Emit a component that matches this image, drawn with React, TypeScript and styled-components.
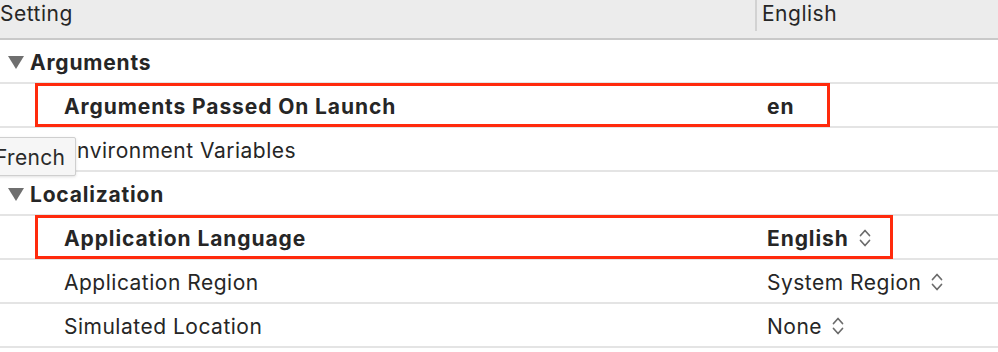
import * as React from 'react'
import styled, { createGlobalStyle } from 'styled-components'

const GlobalStyle = createGlobalStyle`
  html, body {
    margin: 0;
    padding: 0;
    background: #ffffff;
    overflow: hidden;
  }
  body {
    font-family: Inter, "Noto Sans", sans-serif;
    color: #262626;
    -webkit-font-smoothing: antialiased;
  }
`

type Item = {
  name: string
  value?: string
  group?: boolean
  bold?: boolean
  popup?: boolean
  highlight?: number
  tooltip?: string
}

const items: Item[] = [
  { name: 'Arguments', group: true },
  { name: 'Arguments Passed On Launch', value: 'en', bold: true, highlight: 795 },
  { name: 'Environment Variables', tooltip: 'French' },
  { name: 'Localization', group: true },
  { name: 'Application Language', value: 'English', bold: true, popup: true, highlight: 858 },
  { name: 'Application Region', value: 'System Region', popup: true },
  { name: 'Simulated Location', value: 'None', popup: true },
]

const Disclosure = () => (
  <svg width="16" height="13" viewBox="0 0 16 13">
    <polygon points="0,0 16,0 8,13" fill="#6f6f6f" />
  </svg>
)

const UpDown = () => (
  <svg width="12" height="20" viewBox="0 0 12 20">
    <polyline points="1.5,7.5 6,2.5 10.5,7.5" fill="none" stroke="#6b6b6b" strokeWidth="1.7" strokeLinecap="round" strokeLinejoin="round" />
    <polyline points="1.5,12.5 6,17.5 10.5,12.5" fill="none" stroke="#6b6b6b" strokeWidth="1.7" strokeLinecap="round" strokeLinejoin="round" />
  </svg>
)

const App = () => (
  <Editor>
    <GlobalStyle />
    <HeaderRow>
      <HeaderCell>Setting</HeaderCell>
      <HeaderCell>English</HeaderCell>
    </HeaderRow>
    {items.map((it) => (
      <Row key={it.name}>
        {it.group ? (
          <GroupName>
            <Disclosure />
            {it.name}
          </GroupName>
        ) : (
          <Name bold={it.bold}>{it.name}</Name>
        )}
        <Value bold={it.bold}>
          {it.value}
          {it.popup && <UpDown />}
        </Value>
        {it.highlight && <Highlight style={{ width: it.highlight }} />}
        {it.tooltip && <Tooltip>{it.tooltip}</Tooltip>}
      </Row>
    ))}
  </Editor>
)

const Editor = styled.div`
  width: 998px;
  height: 352px;
  overflow: hidden;
  font-size: 21px;
  letter-spacing: 0.5px;
`
const HeaderRow = styled.div`
  display: grid;
  grid-template-columns: 757px 1fr;
  height: 38px;
  background: #ececec;
  border-bottom: 2px solid #c9c9c9;
`
const HeaderCell = styled.div`
  display: flex;
  align-items: flex-start;
  padding: 1px 0 0 0;
  height: 31px;
  box-sizing: border-box;
  & + & {
    padding-left: 5px;
  }
  &:first-child {
    border-right: 2px solid #d2d2d2;
  }
`
const Row = styled.div`
  position: relative;
  display: grid;
  grid-template-columns: 767px 1fr;
  align-items: center;
  box-sizing: border-box;
  height: 44px;
  padding-top: 2px;
  border-bottom: 2px solid #e4e4e4;
`
const GroupName = styled.div`
  display: flex;
  align-items: center;
  gap: 6px;
  padding-left: 8px;
  font-weight: 700;
  letter-spacing: 0.8px;
`
const Name = styled.div<{ bold?: boolean }>`
  padding-left: 64px;
  font-weight: ${(p) => (p.bold ? 700 : 400)};
  letter-spacing: ${(p) => (p.bold ? '0.9px' : '0.5px')};
`
const Value = styled.div<{ bold?: boolean }>`
  display: flex;
  align-items: center;
  gap: 10px;
  font-weight: ${(p) => (p.bold ? 700 : 400)};
  letter-spacing: ${(p) => (p.bold ? '0.9px' : '0.5px')};
`
const Highlight = styled.div`
  position: absolute;
  left: 35px;
  top: -1px;
  bottom: -1px;
  border: 3px solid #ff2a0c;
  box-sizing: border-box;
  pointer-events: none;
`
const Tooltip = styled.div`
  position: absolute;
  left: -8px;
  top: 9px;
  height: 39px;
  width: 84px;
  box-sizing: border-box;
  display: flex;
  align-items: center;
  padding: 2px 0 0 2px;
  background: #f6f6f6;
  border: 1px solid #cfcfcf;
  border-radius: 2px;
  box-shadow: 0 1px 3px rgba(0, 0, 0, 0.12);
  color: #2a2a2a;
  letter-spacing: 0.3px;
  z-index: 2;
`

export default App
